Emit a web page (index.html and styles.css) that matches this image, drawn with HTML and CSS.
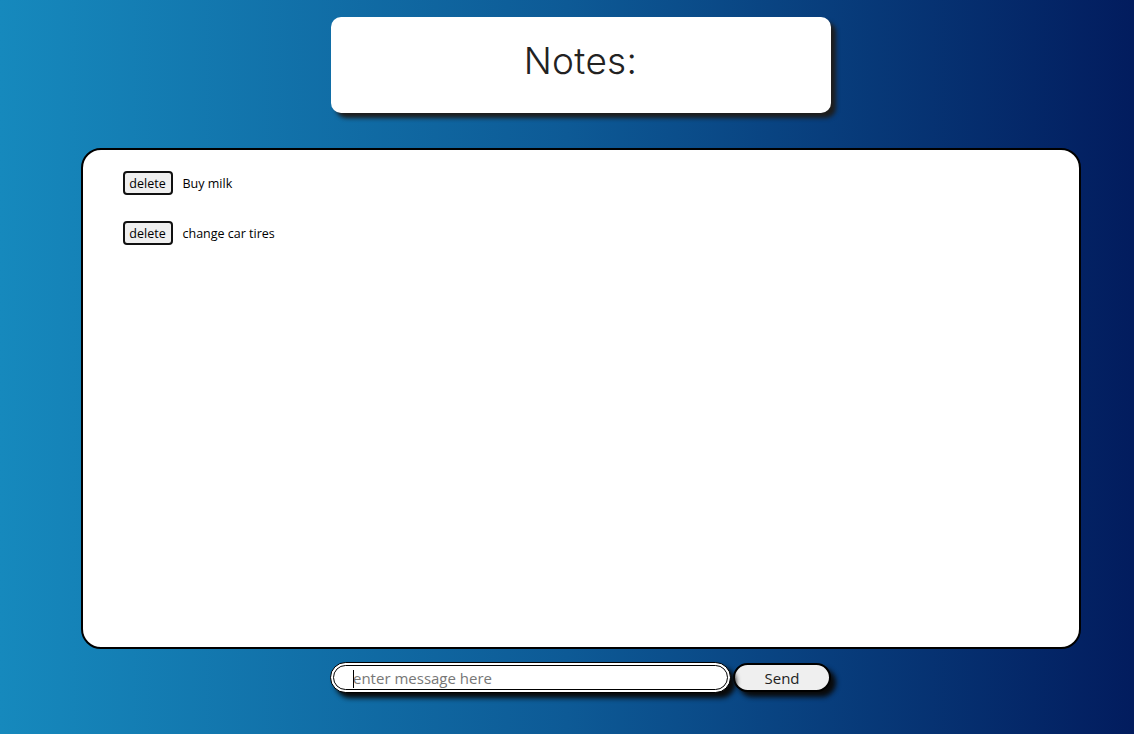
FILE: index.html
```html
<!DOCTYPE html>
<html>
<head>
<meta charset="utf-8">
<link rel="stylesheet" href="styles.css">
</head>
<body>
<div class="page">
  <header class="title-card"><h1>Notes:</h1></header>
  <main class="notes">
    <div class="note"><button class="del">delete</button><span>Buy milk</span></div>
    <div class="note"><button class="del">delete</button><span>change car tires</span></div>
  </main>
  <form class="composer">
    <div class="input-wrap"><span class="caret"></span><input class="msg" type="text" placeholder="enter message here"></div>
    <button type="button" class="send">Send</button>
  </form>
</div>
</body>
</html>
```
FILE: styles.css
```css
html, body { margin: 0; padding: 0; height: 100%; }
body {
  background: linear-gradient(to right, #1689bd 0%, #0d5a96 50%, #021c5e 100%);
  font-family: "Open Sans", "Noto Sans", sans-serif;
  overflow: hidden;
}
.page {
  display: flex;
  flex-direction: column;
  align-items: center;
  padding-top: 17px;
  padding-left: 27px;
}
.title-card {
  width: 500px;
  height: 96px;
  box-sizing: border-box;
  background: #fff;
  border-radius: 10px;
  box-shadow: 5px 5px 4px #1e1e1e;
  display: flex;
  justify-content: center;
  align-items: center;
}
.title-card h1 {
  margin: 0 0 9px 0;
  font-family: "Inter", "Liberation Sans", sans-serif;
  font-weight: 300;
  font-size: 37px;
  color: #222;
  letter-spacing: 0.3px;
}
.notes {
  margin-top: 35px;
  width: 1000px;
  height: 501px;
  box-sizing: border-box;
  background: #fff;
  border: 2px solid #000;
  border-radius: 20px;
  padding: 21px 0 0 40px;
  display: flex;
  flex-direction: column;
  gap: 26px;
}
.note {
  display: flex;
  align-items: center;
  gap: 10px;
  font-size: 12.5px;
  color: #000;
}
.del {
  width: 50px;
  height: 24px;
  box-sizing: border-box;
  border: 2px solid #111;
  border-radius: 4px;
  background: #efefef;
  font-family: "Open Sans", "Noto Sans", sans-serif;
  font-size: 12.5px;
  padding: 0;
  color: #000;
}
.composer {
  margin: 13px 0 0 0;
  display: flex;
  align-items: center;
  gap: 2px;
}
.input-wrap {
  position: relative;
  width: 401px;
  height: 31px;
  box-sizing: border-box;
  border: 4px double #000;
  border-radius: 16px;
  background: #fff;
  box-shadow: 5px 5px 5px #0a0a0a;
  display: flex;
  align-items: center;
}
.caret {
  position: absolute;
  left: 19px;
  top: 4px;
  width: 1px;
  height: 18px;
  background: #000;
}
.msg {
  border: 0;
  outline: none;
  background: transparent;
  width: 100%;
  padding: 0 0 0 19px;
  font-family: "Open Sans", "Noto Sans", sans-serif;
  font-size: 15px;
  color: #000;
}
.msg::placeholder { color: #777; }
.send {
  width: 98px;
  height: 29px;
  box-sizing: border-box;
  border: 2px solid #000;
  border-radius: 15px;
  background: #efefef;
  box-shadow: 5px 5px 5px #0a0a0a;
  font-family: "Open Sans", "Noto Sans", sans-serif;
  font-size: 15px;
  color: #222;
  padding: 0;
}
```
